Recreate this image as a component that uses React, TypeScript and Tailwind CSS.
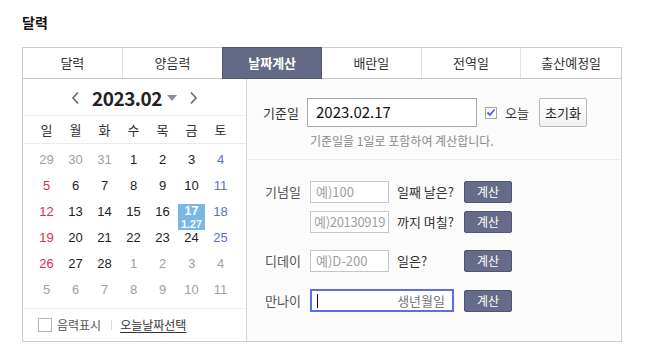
import React from "react";

const FONT = { fontFamily: '"Noto Sans CJK KR", "Noto Sans", sans-serif' };
const NUM = { fontFamily: '"Liberation Sans", Arial, sans-serif' };

type Day = { d: string; c: string; hl?: boolean };

const G = "text-[#a0a0a0]";
const R = "text-[#e3284a]";
const B = "text-[#5b6dd6]";
const K = "text-[#222]";

const weeks: Day[][] = [
  [
    { d: "29", c: G }, { d: "30", c: G }, { d: "31", c: G }, { d: "1", c: K }, { d: "2", c: K }, { d: "3", c: K }, { d: "4", c: B },
  ],
  [
    { d: "5", c: R }, { d: "6", c: K }, { d: "7", c: K }, { d: "8", c: K }, { d: "9", c: K }, { d: "10", c: K }, { d: "11", c: B },
  ],
  [
    { d: "12", c: R }, { d: "13", c: K }, { d: "14", c: K }, { d: "15", c: K }, { d: "16", c: K }, { d: "17", c: K, hl: true }, { d: "18", c: B },
  ],
  [
    { d: "19", c: R }, { d: "20", c: K }, { d: "21", c: K }, { d: "22", c: K }, { d: "23", c: K }, { d: "24", c: K }, { d: "25", c: B },
  ],
  [
    { d: "26", c: R }, { d: "27", c: K }, { d: "28", c: K }, { d: "1", c: G }, { d: "2", c: G }, { d: "3", c: G }, { d: "4", c: G },
  ],
  [
    { d: "5", c: G }, { d: "6", c: G }, { d: "7", c: G }, { d: "8", c: G }, { d: "9", c: G }, { d: "10", c: G }, { d: "11", c: G },
  ],
];

const tabs = ["달력", "양음력", "날짜계산", "배란일", "전역일", "출산예정일"];

function CalcBtn() {
  return (
    <button className="w-[48px] h-[22px] rounded-[2px] border border-[#4f5572] bg-[#656b88] text-white text-[12px] leading-none">
      계산
    </button>
  );
}

function Chevron({ dir }: { dir: "l" | "r" }) {
  return (
    <svg width="9" height="14" viewBox="0 0 9 14" fill="none">
      {dir === "l" ? (
        <path d="M7 1.5 L2 7 L7 12.5" stroke="#6b6f80" strokeWidth="1.8" />
      ) : (
        <path d="M2 1.5 L7 7 L2 12.5" stroke="#6b6f80" strokeWidth="1.8" />
      )}
    </svg>
  );
}

export default function App() {
  return (
    <div className="w-[660px] h-[350px] bg-white pl-[22px] pt-[11px] text-[#222]" style={FONT}>
      <div className="text-[14px] font-bold leading-[22px] text-[#111]">달력</div>
      <div className="mt-[14px] w-[600px] border border-[#cdcdcd]">
        {/* tabs */}
        <div className="flex h-[31px] border-b border-[#c8c8c8]">
          {tabs.map((t, i) =>
            i === 2 ? (
              <div
                key={t}
                className="w-[100px] flex items-center justify-center bg-[#646a86] text-white font-bold text-[13px] -mt-px h-[32px] border border-[#4f556f]"
              >
                {t}
              </div>
            ) : (
              <div
                key={t}
                className={`w-[100px] flex items-center justify-center text-[13px] text-[#333] ${i < 5 && i !== 1 ? "border-r border-[#e2e2e2]" : ""}`}
              >
                {t}
              </div>
            )
          )}
        </div>
        {/* body */}
        <div className="flex h-[262px]">
          {/* calendar */}
          <div className="w-[224px] border-r border-[#d8d8d8] flex flex-col">
            <div className="h-[37px] border-b border-[#ececec] flex items-center justify-center gap-[12px] pt-[1px]">
              <Chevron dir="l" />
              <div className="flex items-center gap-[5px]">
                <span className="text-[19px] font-bold tracking-[-0.5px] text-[#222] leading-none">2023.02</span>
                <svg width="10" height="6" viewBox="0 0 10 6">
                  <path d="M0 0 L10 0 L5 6 Z" fill="#8a8e9c" />
                </svg>
              </div>
              <Chevron dir="r" />
            </div>
            <div className="h-[28px] border-b border-[#ececec] grid grid-cols-[repeat(7,29px)] pl-[9px] items-center text-[13px] text-[#333]">
              {["일", "월", "화", "수", "목", "금", "토"].map((w) => (
                <div key={w} className="text-center">{w}</div>
              ))}
            </div>
            <div className="pt-[3px] pb-[5px] pl-[9px]" style={NUM}>
              {weeks.map((wk, wi) => (
                <div key={wi} className="grid grid-cols-[repeat(7,29px)] h-[26px]">
                  {wk.map((day, di) => (
                    <div key={di} className={`relative flex items-center justify-center text-[13px] ${day.c}`}>
                      {day.hl ? (
                        <div className="absolute left-[1px] top-[5px] w-[27px] h-[26px] bg-[#79b8e6] flex flex-col items-center justify-center text-white">
                          <span className="text-[12.5px] font-bold leading-[13px]">{day.d}</span>
                          <span className="text-[10.5px] font-bold leading-[12px]">1.27</span>
                        </div>
                      ) : (
                        day.d
                      )}
                    </div>
                  ))}
                </div>
              ))}
            </div>
            <div className="flex-1 border-t border-[#ececec] flex items-center pl-[15px] text-[12px]">
              <span className="w-[14px] h-[14px] border border-[#b5b5b5] bg-white" />
              <span className="ml-[5px] text-[#555]">음력표시</span>
              <span className="ml-[10px] w-px h-[10px] bg-[#dcdcdc]" />
              <span className="ml-[8px] text-[#333] underline underline-offset-2">오늘날짜선택</span>
            </div>
          </div>
          {/* right */}
          <div className="flex-1 bg-[#fbfbfb] flex flex-col">
            <div className="h-[81px] border-b border-[#ececec] pl-[16px] pt-[19px]">
              <div className="flex items-center h-[29px]">
                <span className="w-[44px] text-[13px] text-[#333]">기준일</span>
                <div className="w-[170px] h-[29px] border border-[#a9a9a9] bg-white flex items-center pl-[8px] text-[15px] text-[#111]">
                  2023.02.17
                </div>
                <span className="ml-[8px] w-[12px] h-[12px] border border-[#a8a8a8] bg-white flex items-center justify-center">
                  <svg width="10" height="9" viewBox="0 0 10 9">
                    <path d="M1.5 4.5 L4 7 L8.5 1.5" stroke="#4a63d8" strokeWidth="1.8" fill="none" />
                  </svg>
                </span>
                <span className="ml-[8px] text-[13px] text-[#333]">오늘</span>
                <button className="ml-[10px] w-[48px] h-[29px] border border-[#b9b9b9] rounded-[2px] bg-gradient-to-b from-white to-[#f1f1f1] text-[13px] text-[#222]">
                  초기화
                </button>
              </div>
              <div className="ml-[47px] mt-[4px] text-[12px] text-[#8a8a8a] leading-[20px]">
                기준일을 1일로 포함하여 계산합니다.
              </div>
            </div>
            <div className="pl-[18px] pt-[21px] flex flex-col text-[13px]">
              <div className="flex items-center h-[22px]">
                <span className="w-[45px] text-[#555]">기념일</span>
                <div className="w-[79px] h-[22px] border border-[#c6c6c6] bg-white flex items-center pl-[5px] text-[#a0a0a0] overflow-hidden whitespace-nowrap">예)100</div>
                <span className="w-[75px] pl-[8px] text-[#333]">일째 날은?</span>
                <CalcBtn />
              </div>
              <div className="flex items-center h-[22px] mt-[8px]">
                <span className="w-[45px]" />
                <div className="w-[79px] h-[22px] border border-[#c6c6c6] bg-white flex items-center pl-[3px] text-[#a0a0a0] overflow-hidden whitespace-nowrap tracking-[-0.3px]">예)20130919</div>
                <span className="w-[75px] pl-[8px] text-[#333]">까지 며칠?</span>
                <CalcBtn />
              </div>
              <div className="flex items-center h-[22px] mt-[17px]">
                <span className="w-[45px] text-[#555]">디데이</span>
                <div className="w-[79px] h-[22px] border border-[#c6c6c6] bg-white flex items-center pl-[5px] text-[#a0a0a0] overflow-hidden whitespace-nowrap">예)D-200</div>
                <span className="w-[75px] pl-[8px] text-[#333]">일은?</span>
                <CalcBtn />
              </div>
              <div className="flex items-center h-[23px] mt-[17px]">
                <span className="w-[45px] text-[#555]">만나이</span>
                <div className="w-[144px] h-[23px] border-2 border-[#5b6cf2] bg-white flex items-center justify-between pl-[5px] pr-[7px]">
                  <span className="w-px h-[14px] bg-[#111]" />
                  <span className="text-[#777]">생년월일</span>
                </div>
                <span className="w-[10px]" />
                <CalcBtn />
              </div>
            </div>
          </div>
        </div>
      </div>
    </div>
  );
}
